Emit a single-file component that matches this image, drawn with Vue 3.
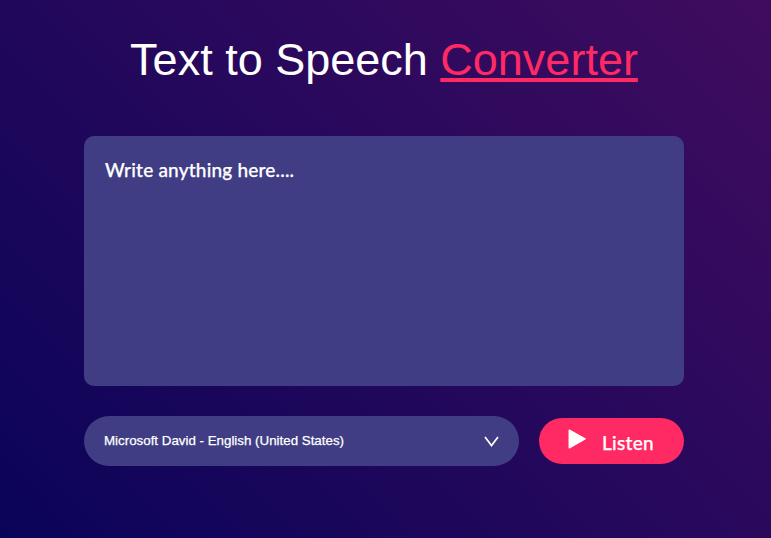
<script setup>
import { ref } from 'vue'

const text = ref('')
const voices = ['Microsoft David - English (United States)']
const voice = ref(voices[0])
</script>

<template>
  <main class="hero">
    <h1>Text to Speech <span>Converter</span></h1>
    <textarea v-model="text" placeholder="Write anything here...."></textarea>
    <div class="row">
      <div class="picker">
        <select v-model="voice">
          <option v-for="v in voices" :key="v" :value="v">{{ v }}</option>
        </select>
        <svg class="chevron" viewBox="0 0 15 11" aria-hidden="true">
          <path d="M1 1 L7.5 9.5 L14 1" />
        </svg>
      </div>
      <button type="button">
        <svg class="play" viewBox="0 0 18 20" aria-hidden="true">
          <path d="M1.3 1.2 L17 9.9 L1.3 18.8 Z" />
        </svg>
        <span>Listen</span>
      </button>
    </div>
  </main>
</template>

<style>
body {
  margin: 0;
}
</style>

<style scoped>
* {
  box-sizing: border-box;
}
.hero {
  width: 100%;
  min-height: 100vh;
  padding: 34px 3px 0 0;
  background: linear-gradient(45deg, #0a0459, #400c5f);
  display: flex;
  flex-direction: column;
  align-items: center;
  color: #fff;
  font-family: "Liberation Sans", Arial, sans-serif;
}
h1 {
  margin: 0 0 50px;
  font-size: 45px;
  line-height: 52px;
  font-weight: 500;
  white-space: nowrap;
}
h1 span {
  color: #ff2963;
  text-decoration: underline;
  text-decoration-thickness: 4px;
  text-underline-offset: 3px;
  text-decoration-skip-ink: none;
}
textarea {
  display: block;
  width: 600px;
  height: 250px;
  margin: 0 0 30px;
  padding: 20px 20px 20px 21px;
  border: 0;
  border-radius: 10px;
  outline: 0;
  resize: none;
  background: #403d84;
  color: #fff;
  font-family: "Comic Sans MS", Lato, sans-serif;
  font-size: 19px;
  font-weight: 500;
  line-height: 27px;
  letter-spacing: 0.2px;
  -webkit-text-stroke: 0.25px #fff;
}
textarea::placeholder {
  color: #fff;
  opacity: 1;
}
.row {
  width: 600px;
  display: flex;
  align-items: center;
  gap: 20px;
}
.picker {
  flex: 1;
  height: 50px;
  padding: 0 20px;
  border-radius: 25px;
  background: #403d84;
  display: flex;
  align-items: center;
}
select {
  flex: 1;
  height: 50px;
  padding: 0 0 2px;
  border: 0;
  outline: 0;
  appearance: none;
  background: transparent;
  color: #fff;
  font: 13.333px "Liberation Sans", Arial, sans-serif;
  -webkit-text-stroke: 0.25px #fff;
}
.chevron {
  width: 15px;
  height: 11px;
  fill: none;
  stroke: #fff;
  stroke-width: 1.7;
}
button {
  width: 145px;
  height: 46px;
  padding: 0 0 0 29px;
  border: 0;
  border-radius: 23px;
  background: #ff2963;
  color: #fff;
  display: flex;
  align-items: center;
  font-family: "Comic Sans MS", Lato, sans-serif;
  font-size: 19px;
  font-weight: 500;
}
.play {
  width: 18px;
  height: 20px;
  margin: 0 16px 5px 0;
  fill: #fff;
  stroke: #fff;
  stroke-width: 1.5;
  stroke-linejoin: round;
}
button span {
  padding-top: 2px;
  letter-spacing: 0.3px;
  -webkit-text-stroke: 0.25px #fff;
}
</style>
